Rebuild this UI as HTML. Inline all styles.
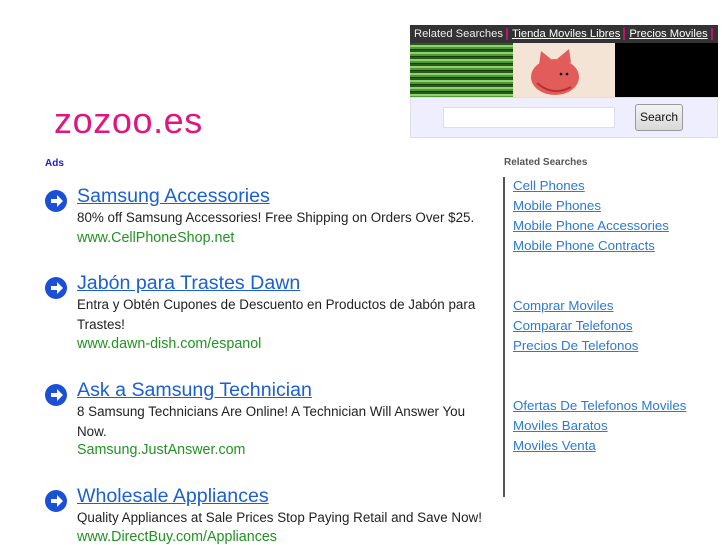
<!DOCTYPE html>
<html><head><meta charset="utf-8"><style>
body{margin:0;width:727px;height:545px;overflow:hidden;background:#fff;font-family:"Liberation Sans",sans-serif;position:relative}
.a{position:absolute}
.logo{left:54px;top:100px;font-size:36px;color:#e0157f;letter-spacing:0.6px}
.bar{left:410px;top:25px;width:308px;height:18px;background:#333;color:#eee;font-size:11.2px;line-height:18px;white-space:nowrap;overflow:hidden}
.bar span{padding:0 3px 0 4px;border-right:2px solid #c0156f}
.bar u{color:#fff}
.img{left:410px;top:43px;width:308px;height:54px;background:#000}
.stripes{left:410px;top:43px;width:103px;height:54px;background:repeating-linear-gradient(#2a5a1a 0 2px,#8fd070 2px 4px,#4c9a30 4px 6px,#1a3a10 6px 7px)}
.cat{left:513px;top:43px;width:102px;height:54px;background:#f3e4d6}
.sbox{left:410px;top:97px;width:306px;height:39px;background:#eeeeff;border:1px solid #dde}
.inp{left:443px;top:107px;width:170px;height:19px;background:#fff;border:1px solid #dde}
.btn{left:635px;top:104px;width:46px;height:25px;background:linear-gradient(#f4f4f4,#d8d8d8);border:1px solid #999;border-radius:3px;font-size:12px;line-height:25px;text-align:center;color:#111}
.ads{left:45px;top:158px;font-size:10px;font-weight:bold;color:#1a1adb}
.ad{left:45px;width:450px}
.ad .ic{position:absolute;left:0;top:6px;width:22px;height:22px;border-radius:50%;background:#1a4fd6}
.ad .t{position:absolute;left:32px;top:1px;font-size:19.6px;color:#1a5fd6;text-decoration:underline;white-space:nowrap}
.ad .d{position:absolute;left:32px;top:24px;font-size:13.4px;color:#222;line-height:20px;width:408px}
.ad .u{position:absolute;left:32px;font-size:14.3px;color:#219321}
.rs{left:504px;top:157px;font-size:10px;font-weight:bold;color:#555}
.vl{left:503px;top:177px;width:2px;height:320px;background:#555}
.links{left:513px;font-size:13.3px;line-height:20px}
.links a{color:#2a7ad8;text-decoration:underline;display:block}
</style></head><body>
<div class="a logo">zozoo.es</div>
<div class="a bar"><span>Related Searches</span><span><u>Tienda Moviles Libres</u></span><span><u>Precios Moviles</u></span></div>
<div class="a img"></div><div class="a stripes"></div>
<div class="a cat"><svg width="102" height="54"><ellipse cx="42" cy="34" rx="24" ry="18" fill="#e25c5c"/><path d="M26 22 L28 8 L38 16Z M44 16 L56 6 L58 20Z" fill="#e25c5c"/><circle cx="48" cy="31" r="1.3"/><circle cx="54" cy="31" r="1.3"/><path d="M24 40 Q40 54 58 44" stroke="#b83030" stroke-width="2" fill="none"/></svg></div>
<div class="a sbox"></div><div class="a inp"></div><div class="a btn">Search</div>
<div class="a ads">Ads</div>

<div class="a ad" style="top:184px"><div class="ic"><svg width="22" height="22"><path d="M6 9h6V5l6 6-6 6v-4H6z" fill="#fff"/></svg></div><div class="t">Samsung Accessories</div><div class="d">80% off Samsung Accessories! Free Shipping on Orders Over $25.</div><div class="u" style="top:46px">www.CellPhoneShop.net</div></div>
<div class="a ad" style="top:271px"><div class="ic"><svg width="22" height="22"><path d="M6 9h6V5l6 6-6 6v-4H6z" fill="#fff"/></svg></div><div class="t">Jabón para Trastes Dawn</div><div class="d">Entra y Obtén Cupones de Descuento en Productos de Jabón para Trastes!</div><div class="u" style="top:65px">www.dawn-dish.com/espanol</div></div>
<div class="a ad" style="top:378px"><div class="ic"><svg width="22" height="22"><path d="M6 9h6V5l6 6-6 6v-4H6z" fill="#fff"/></svg></div><div class="t">Ask a Samsung Technician</div><div class="d">8 Samsung Technicians Are Online! A Technician Will Answer You Now.</div><div class="u" style="top:64px">Samsung.JustAnswer.com</div></div>
<div class="a ad" style="top:484px"><div class="ic"><svg width="22" height="22"><path d="M6 9h6V5l6 6-6 6v-4H6z" fill="#fff"/></svg></div><div class="t">Wholesale Appliances</div><div class="d">Quality Appliances at Sale Prices Stop Paying Retail and Save Now!</div><div class="u" style="top:45px">www.DirectBuy.com/Appliances</div></div>

<div class="a rs">Related Searches</div>
<div class="a vl"></div>
<div class="a links" style="top:176px"><a>Cell Phones</a><a>Mobile Phones</a><a>Mobile Phone Accessories</a><a>Mobile Phone Contracts</a></div>
<div class="a links" style="top:296px"><a>Comprar Moviles</a><a>Comparar Telefonos</a><a>Precios De Telefonos</a></div>
<div class="a links" style="top:396px"><a>Ofertas De Telefonos Moviles</a><a>Moviles Baratos</a><a>Moviles Venta</a></div>
</body></html>
